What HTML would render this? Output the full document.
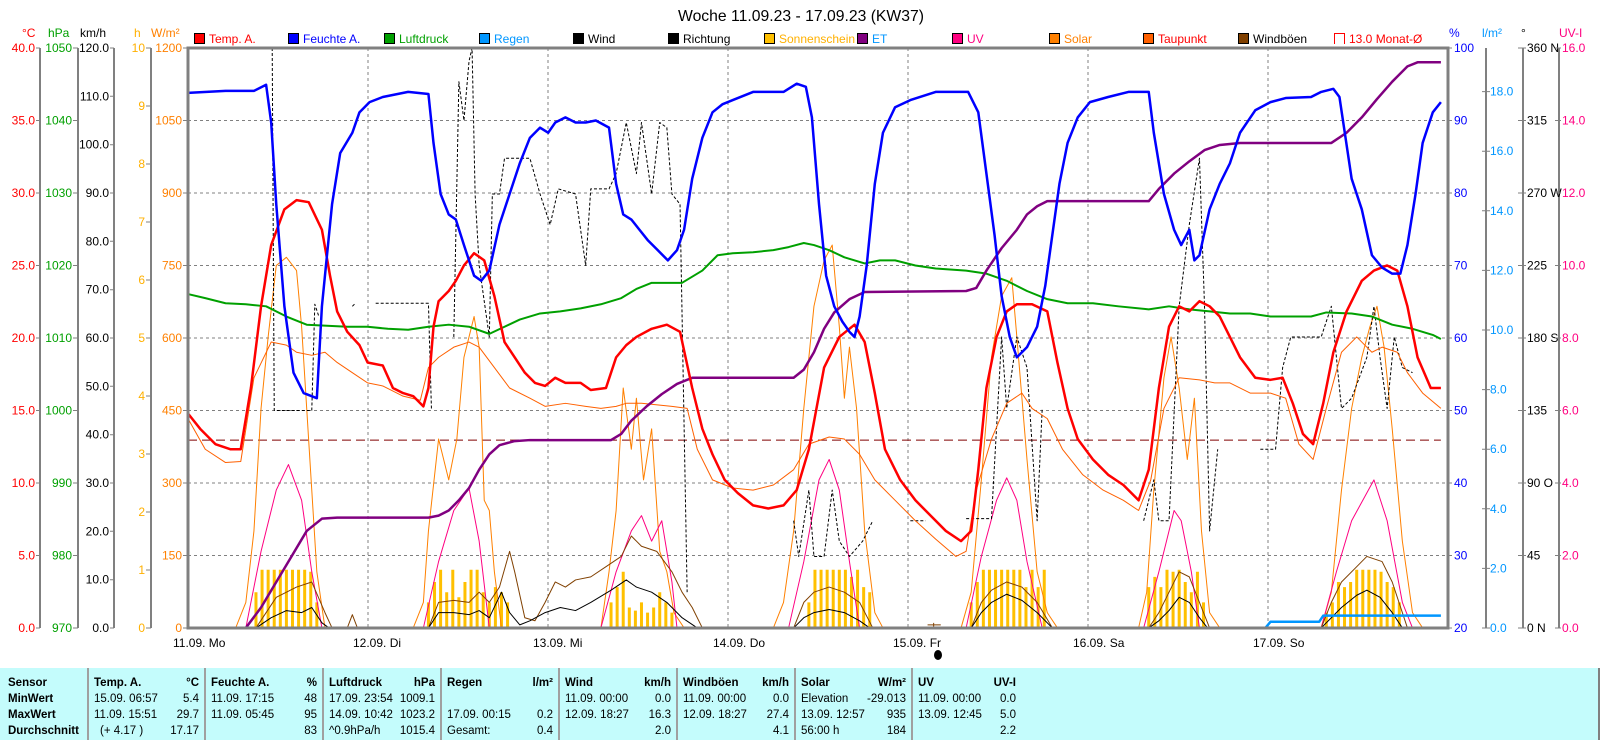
<!DOCTYPE html>
<html><head><meta charset="utf-8"><style>
html,body{margin:0;padding:0;background:#fff;}
svg{display:block;font-family:"Liberation Sans",sans-serif;}
</style></head><body>
<svg width="1600" height="740" viewBox="0 0 1600 740" xmlns="http://www.w3.org/2000/svg">
<rect width="1600" height="740" fill="#fff"/>
<text x="801" y="21" font-size="16" text-anchor="middle" textLength="246" lengthAdjust="spacingAndGlyphs" fill="#000">Woche 11.09.23 - 17.09.23 (KW37)</text>

<!-- unit headers -->
<g font-size="12">
<text x="22" y="37" fill="#f00">°C</text>
<text x="48" y="37" fill="#00a000">hPa</text>
<text x="80" y="37" fill="#000">km/h</text>
<text x="134" y="37" fill="#ffb000">h</text>
<text x="151" y="37" fill="#ff8000">W/m²</text>
<text x="1449" y="37" fill="#0000ff">%</text>
<text x="1482" y="37" fill="#0096ff">l/m²</text>
<text x="1521" y="37" fill="#000">°</text>
<text x="1559" y="37" fill="#ff0080">UV-I</text>
</g>

<!-- legend -->
<g font-size="12">
<rect x="194.5" y="33.5" width="10" height="10" fill="#f00" stroke="#000"/><text x="209" y="43" fill="#f00">Temp. A.</text>
<rect x="288.5" y="33.5" width="10" height="10" fill="#00f" stroke="#000"/><text x="303" y="43" fill="#00f">Feuchte A.</text>
<rect x="384.5" y="33.5" width="10" height="10" fill="#00a000" stroke="#000"/><text x="399" y="43" fill="#00a000">Luftdruck</text>
<rect x="479.5" y="33.5" width="10" height="10" fill="#0096ff" stroke="#000"/><text x="494" y="43" fill="#0096ff">Regen</text>
<rect x="573.5" y="33.5" width="10" height="10" fill="#000" stroke="#000"/><text x="588" y="43" fill="#000">Wind</text>
<rect x="668.5" y="33.5" width="10" height="10" fill="#000" stroke="#000"/><text x="683" y="43" fill="#000">Richtung</text>
<rect x="764.5" y="33.5" width="10" height="10" fill="#ffc000" stroke="#000"/><text x="779" y="43" fill="#ffb000">Sonnenschein</text>
<rect x="857.5" y="33.5" width="10" height="10" fill="#800080" stroke="#000"/><text x="872" y="43" fill="#0096ff">ET</text>
<rect x="952.5" y="33.5" width="10" height="10" fill="#ff0080" stroke="#000"/><text x="967" y="43" fill="#ff0080">UV</text>
<rect x="1049.5" y="33.5" width="10" height="10" fill="#ff8000" stroke="#000"/><text x="1064" y="43" fill="#ff8000">Solar</text>
<rect x="1143.5" y="33.5" width="10" height="10" fill="#ff6000" stroke="#000"/><text x="1158" y="43" fill="#f00">Taupunkt</text>
<rect x="1238.5" y="33.5" width="10" height="10" fill="#804000" stroke="#000"/><text x="1253" y="43" fill="#000">Windböen</text>
<path d="M1334.5 44 V33.5 H1344.5 V44" fill="none" stroke="#f00"/><text x="1349" y="43" fill="#f00">13.0 Monat-Ø</text>
</g>

<!-- left axes lines -->
<g stroke="#808080" stroke-width="2">
<line x1="40" y1="48" x2="40" y2="628"/>
<line x1="78" y1="48" x2="78" y2="628"/>
<line x1="114" y1="48" x2="114" y2="628"/>
<line x1="151" y1="48" x2="151" y2="628"/>
<line x1="1486" y1="48" x2="1486" y2="628"/>
<line x1="1523" y1="48" x2="1523" y2="628"/>
<line x1="1559" y1="48" x2="1559" y2="628"/>
</g>
<g font-size="12" dominant-baseline="central">
<g fill="#f00" text-anchor="end">
<text x="35" y="48">40.0</text><text x="35" y="120.5">35.0</text><text x="35" y="193">30.0</text><text x="35" y="265.5">25.0</text><text x="35" y="338">20.0</text><text x="35" y="410.5">15.0</text><text x="35" y="483">10.0</text><text x="35" y="555.5">5.0</text><text x="35" y="628">0.0</text>
</g>
<g fill="#00a000" text-anchor="end">
<text x="72" y="48">1050</text><text x="72" y="120.5">1040</text><text x="72" y="193">1030</text><text x="72" y="265.5">1020</text><text x="72" y="338">1010</text><text x="72" y="410.5">1000</text><text x="72" y="483">990</text><text x="72" y="555.5">980</text><text x="72" y="628">970</text>
</g>
<g fill="#000" text-anchor="end">
<text x="109" y="48">120.0</text><text x="109" y="96.3">110.0</text><text x="109" y="144.7">100.0</text><text x="109" y="193">90.0</text><text x="109" y="241.3">80.0</text><text x="109" y="289.7">70.0</text><text x="109" y="338">60.0</text><text x="109" y="386.3">50.0</text><text x="109" y="434.7">40.0</text><text x="109" y="483">30.0</text><text x="109" y="531.3">20.0</text><text x="109" y="579.7">10.0</text><text x="109" y="628">0.0</text>
</g>
<g fill="#ffb000" text-anchor="end">
<text x="145" y="48">10</text><text x="145" y="106">9</text><text x="145" y="164">8</text><text x="145" y="222">7</text><text x="145" y="280">6</text><text x="145" y="338">5</text><text x="145" y="396">4</text><text x="145" y="454">3</text><text x="145" y="512">2</text><text x="145" y="570">1</text><text x="145" y="628">0</text>
</g>
<g fill="#ff8000" text-anchor="end">
<text x="182" y="48">1200</text><text x="182" y="120.5">1050</text><text x="182" y="193">900</text><text x="182" y="265.5">750</text><text x="182" y="338">600</text><text x="182" y="410.5">450</text><text x="182" y="483">300</text><text x="182" y="555.5">150</text><text x="182" y="628">0</text>
</g>
<g fill="#0000ff">
<text x="1454" y="48">100</text><text x="1454" y="120.5">90</text><text x="1454" y="193">80</text><text x="1454" y="265.5">70</text><text x="1454" y="338">60</text><text x="1454" y="410.5">50</text><text x="1454" y="483">40</text><text x="1454" y="555.5">30</text><text x="1454" y="628">20</text>
</g>
<g fill="#0096ff">
<text x="1490" y="91.6">18.0</text><text x="1490" y="151.2">16.0</text><text x="1490" y="210.8">14.0</text><text x="1490" y="270.4">12.0</text><text x="1490" y="330">10.0</text><text x="1490" y="389.6">8.0</text><text x="1490" y="449.2">6.0</text><text x="1490" y="508.8">4.0</text><text x="1490" y="568.4">2.0</text><text x="1490" y="628">0.0</text>
</g>
<g fill="#000">
<text x="1527" y="48">360 N</text><text x="1527" y="120.5">315</text><text x="1527" y="193">270 W</text><text x="1527" y="265.5">225</text><text x="1527" y="338">180 S</text><text x="1527" y="410.5">135</text><text x="1527" y="483">90  O</text><text x="1527" y="555.5">45</text><text x="1527" y="628">0  N</text>
</g>
<g fill="#ff0080">
<text x="1562" y="48">16.0</text><text x="1562" y="120.5">14.0</text><text x="1562" y="193">12.0</text><text x="1562" y="265.5">10.0</text><text x="1562" y="338">8.0</text><text x="1562" y="410.5">6.0</text><text x="1562" y="483">4.0</text><text x="1562" y="555.5">2.0</text><text x="1562" y="628">0.0</text>
</g>
</g>
<!-- ticks -->
<g stroke="#808080" stroke-width="1">
<path d="M36 48H40M36 120.5H40M36 193H40M36 265.5H40M36 338H40M36 410.5H40M36 483H40M36 555.5H40M36 628H40"/>
<path d="M73 48H78M73 120.5H78M73 193H78M73 265.5H78M73 338H78M73 410.5H78M73 483H78M73 555.5H78M73 628H78"/>
<path d="M110 48H114M110 96.3H114M110 144.7H114M110 193H114M110 241.3H114M110 289.7H114M110 338H114M110 386.3H114M110 434.7H114M110 483H114M110 531.3H114M110 579.7H114M110 628H114"/>
<path d="M146 48H151M146 106H151M146 164H151M146 222H151M146 280H151M146 338H151M146 396H151M146 454H151M146 512H151M146 570H151M146 628H151"/>
<path d="M183 48H188M183 120.5H188M183 193H188M183 265.5H188M183 338H188M183 410.5H188M183 483H188M183 555.5H188M183 628H188"/>
<path d="M1448 48H1452M1448 120.5H1452M1448 193H1452M1448 265.5H1452M1448 338H1452M1448 410.5H1452M1448 483H1452M1448 555.5H1452M1448 628H1452"/>
<path d="M1482 91.6H1490M1482 151.2H1490M1482 210.8H1490M1482 270.4H1490M1482 330H1490M1482 389.6H1490M1482 449.2H1490M1482 508.8H1490M1482 568.4H1490M1482 628H1490"/>
<path d="M1518 48H1526M1518 120.5H1526M1518 193H1526M1518 265.5H1526M1518 338H1526M1518 410.5H1526M1518 483H1526M1518 555.5H1526M1518 628H1526"/>
<path d="M1555 48H1561M1555 120.5H1561M1555 193H1561M1555 265.5H1561M1555 338H1561M1555 410.5H1561M1555 483H1561M1555 555.5H1561M1555 628H1561"/>
</g>

<!-- grid -->
<g stroke="#808080" stroke-width="1" stroke-dasharray="3,3">
<path d="M188 120.5H1448M188 193H1448M188 265.5H1448M188 338H1448M188 410.5H1448M188 483H1448M188 555.5H1448"/>
<path d="M368 48V628M548 48V628M728 48V628M908 48V628M1088 48V628M1268 48V628"/>
</g>

<!-- data -->
<g transform="translate(188,48) scale(1.0145,1.021) translate(-183,-47)" fill="none" stroke-linejoin="round">
<path vector-effect="non-scaling-stroke" stroke="#ffc000" stroke-width="3" d="M250 615V580M256 615V558M262 615V558M268 615V558M274 615V558M280 615V558M286 615V558M292 615V558M298 615V558M304 615V560M310 615V590
M420 615V590M426 615V570M432 615V558M438 615V580M444 615V558M450 615V585M456 615V570M462 615V558M468 615V558M474 615V580M480 615V590M486 615V575M492 615V580M498 615V590
M600 615V590M606 615V575M612 615V560M618 615V595M624 615V598M630 615V590M636 615V600M642 615V595M648 615V580M654 615V590M660 615V600
M795 615V590M801 615V558M807 615V558M813 615V558M819 615V558M825 615V558M831 615V558M837 615V565M843 615V558M849 615V575M855 615V580
M955 615V590M961 615V570M967 615V558M973 615V558M979 615V558M985 615V558M991 615V558M997 615V558M1003 615V558M1009 615V575M1015 615V558M1021 615V575M1027 615V558
M1130 615V575M1136 615V565M1142 615V575M1148 615V558M1154 615V560M1160 615V558M1166 615V570M1172 615V580M1178 615V560M1184 615V590
M1305 615V600M1311 615V590M1317 615V570M1323 615V575M1329 615V570M1335 615V558M1341 615V558M1347 615V558M1353 615V558M1359 615V560M1365 615V570M1371 615V575M1377 615V590"/>

<path vector-effect="non-scaling-stroke" stroke="#800000" stroke-width="1" stroke-dasharray="9,5" d="M183 431H1418"/>

<path vector-effect="non-scaling-stroke" stroke="#ff8000" stroke-width="1" d="M230 615L240 590L248 520L255 400L262 330L270 260L280 252L290 265L295 320L300 400L310 560L318 615M405 615L415 590L420 520L430 430L440 470L448 430L455 350L465 310L470 340L475 490L480 500L485 560L492 615M590 615L598 560L605 500L612 380L620 440L625 390L632 470L640 420L648 540L655 560L662 600L672 615M760 615L770 590L780 520L790 400L800 300L810 255L818 240L825 320L830 390L835 340L842 400L850 520L860 600L868 615M945 615L955 580L965 470L975 350L985 290L995 272L1000 330L1010 450L1020 560L1030 600L1040 615M1120 615L1128 580L1135 480L1145 370L1152 330L1160 380L1168 450L1175 390L1182 520L1190 600L1200 615M1300 615L1310 580L1320 480L1330 400L1340 350L1348 320L1355 300L1362 340L1370 420L1380 530L1390 600L1400 615"/>

<path vector-effect="non-scaling-stroke" stroke="#ff0080" stroke-width="1" d="M240 615L255 540L270 480L282 455L295 490L305 560L315 615M415 615L430 550L445 500L460 478L470 530L480 615M590 615L605 560L620 520L630 505L640 530L650 510L660 570L665 615M775 615L790 550L805 470L815 450L825 480L835 550L845 615M950 615L965 545L980 490L990 468L1000 490L1010 550L1025 615M1125 615L1140 560L1155 500L1162 510L1172 560L1180 615M1300 615L1315 560L1330 510L1352 470L1365 510L1380 590L1390 615"/>

<path vector-effect="non-scaling-stroke" stroke="#804000" stroke-width="1" d="M250 615L270 585L290 575L305 570L318 600L325 615M340 615L345 602L350 615M420 615L430 590L445 588L460 590L470 580L480 590L490 575L500 540L505 560L515 605L525 608L535 590L545 570L555 575L565 568L580 565L595 555L610 545L620 525L630 535L645 540L660 560L670 580L680 595L690 615M780 615L790 590L800 580L815 575L830 580L845 590L858 615M955 615L965 590L975 578L990 570L1005 575L1020 590L1035 615M1130 615L1140 600L1150 580L1160 560L1170 565L1180 590L1190 615M1300 615L1310 590L1320 570L1335 555L1345 545L1360 550L1370 570L1385 615"/>

<path vector-effect="non-scaling-stroke" stroke="#000" stroke-width="1" d="M250 615L265 605L280 598L295 600L305 595L315 610L322 615M420 615L430 600L445 600L460 602L470 598L480 605L492 580L500 600L510 612L520 608L535 600L550 595L565 598L580 590L600 578L615 568L625 575L640 580L655 590L670 605L685 615M780 615L790 605L800 600L815 597L830 600L845 608L855 615M955 615L965 600L975 590L990 582L1005 588L1020 600L1035 615M1130 615L1140 608L1150 598L1160 585L1170 590L1180 605L1188 615M1300 615L1310 605L1320 595L1335 583L1345 578L1358 585L1370 600L1380 615"/>

<path vector-effect="non-scaling-stroke" stroke="#000" stroke-width="1" stroke-dasharray="3,2" d="M266 47L268 402L305 402L308 298L312 310M345 300L348 297M368 297L420 297L423 402M445 330L450 80L455 118L460 60L463 47L466 190L470 260L480 330L483 190L490 190L495 155L520 155L530 190L540 220L548 185L565 190L575 260L580 185L598 185L605 170L615 120L625 170L630 120L640 190L648 120L655 125L660 190L668 200L675 580M780 510L785 545L795 480L800 545L810 545L818 480L825 530L835 545L848 530L858 510M895 510L910 510M950 508L975 508L985 330L990 400L1000 330L1010 360L1020 510L1025 400M1125 510L1135 470L1140 510L1150 510L1160 300L1170 220L1180 155L1185 300L1190 520L1198 440M1240 440L1255 440L1262 360L1270 330L1300 330L1310 300L1320 400L1330 390L1345 350L1352 300L1358 350L1365 400L1372 330L1380 360L1390 365"/>

<path vector-effect="non-scaling-stroke" stroke="#ff6000" stroke-width="1" d="M183 410L200 440L220 453L235 452L248 370L265 335L280 338L290 345L305 348L318 345L330 355L345 365L360 375L375 378L395 388L412 392L420 360L430 350L445 340L460 335L470 340L485 360L500 380L520 390L535 398L555 395L575 398L590 400L605 398L615 395L630 395L660 398L675 400L685 440L700 470L720 478L740 480L760 475L780 460L795 435L815 428L830 430L845 445L860 470L880 490L900 510L920 528L940 545L950 540L960 480L975 430L990 395L1005 385L1015 400L1030 410L1045 440L1065 465L1085 480L1105 490L1120 500L1132 470L1145 400L1160 370L1180 372L1195 375L1210 375L1230 385L1250 385L1265 390L1278 435L1292 450L1305 400L1320 345L1335 330L1350 345L1360 340L1375 345L1385 365L1400 385L1418 400"/>

<path vector-effect="non-scaling-stroke" stroke="#00a000" stroke-width="2" d="M183 288L200 292L220 297L240 298L260 300L280 310L300 318L320 319L340 320L360 320L380 322L400 323L420 320L440 318L460 320L480 327L495 320L510 313L530 307L550 305L570 302L590 298L610 292L625 283L640 277L670 277L690 265L705 250L720 248L740 247L760 245L775 242L790 238L800 240L815 245L830 252L850 258L865 255L880 255L900 260L920 263L950 265L970 268L990 275L1010 285L1030 293L1050 297L1075 297L1100 300L1130 303L1150 300L1170 303L1190 305L1210 307L1230 307L1250 310L1270 310L1290 310L1305 306L1330 307L1350 310L1370 318L1390 322L1410 328L1418 332"/>

<path vector-effect="non-scaling-stroke" stroke="#800080" stroke-width="2.5" d="M183 615L240 615L255 595L270 570L285 545L300 520L315 508L330 507L420 507L430 505L440 500L450 490L460 478L470 460L480 445L490 436L505 432L520 431L600 431L610 425L620 412L635 398L650 386L665 376L680 370L700 370L780 370L790 362L800 345L810 322L820 306L835 293L850 286L950 285L960 282L970 265L985 243L1000 225L1010 210L1020 202L1030 197L1130 197L1140 185L1155 170L1170 158L1185 147L1200 142L1220 140L1310 140L1325 130L1340 115L1355 97L1370 80L1385 65L1395 61L1418 61"/>

<path vector-effect="non-scaling-stroke" stroke="#f00" stroke-width="2.5" d="M183 405L195 420L210 435L225 440L235 440L245 380L255 300L265 240L278 205L290 196L302 198L315 225L323 270L330 305L340 325L352 338L360 355L375 358L385 380L395 385L405 388L415 398L420 380L425 320L430 295L440 285L447 275L455 260L465 248L475 255L485 290L495 335L505 350L515 365L525 375L535 378L545 370L555 375L570 375L580 382L595 380L605 350L615 338L625 330L640 322L655 318L668 325L680 380L690 420L700 445L712 470L725 483L740 495L755 498L770 495L783 480L795 440L810 360L825 330L840 318L850 335L860 385L870 440L885 470L900 490L915 505L930 520L945 530L955 520L962 460L970 380L980 330L990 305L1000 298L1015 298L1030 305L1040 355L1050 400L1060 430L1075 450L1090 465L1105 475L1120 490L1130 460L1140 380L1150 320L1160 300L1170 305L1180 295L1190 300L1200 310L1210 330L1220 350L1235 370L1250 372L1262 370L1272 395L1282 425L1292 435L1302 395L1312 345L1325 305L1340 275L1352 265L1365 260L1375 265L1385 300L1395 350L1408 380L1418 380"/>

<path vector-effect="non-scaling-stroke" stroke="#0000ff" stroke-width="2.5" d="M183 91L220 89L248 89L260 83L265 120L270 200L278 300L287 365L297 385L310 390L315 300L325 200L333 150L345 130L352 110L362 100L375 95L400 90L420 92L425 140L432 190L440 210L447 215L455 240L465 270L472 275L480 265L490 220L500 190L510 160L520 135L530 125L538 130L545 120L555 115L565 120L575 120L585 118L598 125L605 180L612 210L620 215L628 225L636 235L646 245L656 255L665 245L672 225L680 175L690 135L700 110L710 102L720 98L740 90L770 90L783 82L792 85L798 115L805 200L812 270L820 300L828 315L835 325L840 330L845 310L852 260L860 180L868 130L880 105L895 98L920 90L952 90L962 110L970 170L978 230L985 290L993 330L1000 350L1010 340L1020 320L1028 280L1035 230L1042 180L1050 140L1060 115L1072 100L1090 95L1110 90L1130 90L1135 130L1145 190L1155 225L1162 240L1170 225L1175 255L1180 250L1190 205L1200 180L1210 160L1220 130L1235 108L1250 100L1265 96L1290 95L1300 90L1312 87L1318 95L1330 175L1340 205L1350 250L1360 262L1370 268L1378 268L1385 240L1393 190L1400 140L1410 110L1418 100"/>

<path vector-effect="non-scaling-stroke" stroke="#0096ff" stroke-width="2.5" d="M183 615L1245 615L1250 609L1298 609L1302 603L1418 603"/>
<path vector-effect="non-scaling-stroke" stroke="#804000" stroke-width="1" d="M918 610V615M912 612H925"/>
</g>

<!-- plot border -->
<rect x="188" y="48" width="1260" height="580" fill="none" stroke="#808080" stroke-width="3"/>

<!-- date labels -->
<g font-size="12" fill="#000">
<text x="173" y="647">11.09.  Mo</text>
<text x="353" y="647">12.09.  Di</text>
<text x="533" y="647">13.09.  Mi</text>
<text x="713" y="647">14.09.  Do</text>
<text x="893" y="647">15.09.  Fr</text>
<text x="1073" y="647">16.09.  Sa</text>
<text x="1253" y="647">17.09.  So</text>
</g>
<ellipse cx="938" cy="655" rx="4" ry="5" fill="#000"/>

<!-- table -->
<rect x="0" y="668" width="1598" height="72" fill="#c4fcfc"/>
<line x1="1599" y1="668" x2="1599" y2="740" stroke="#808080" stroke-width="2"/>
<g stroke="#a0a0a0" stroke-width="2">
<line x1="88" y1="668" x2="88" y2="740"/><line x1="205" y1="668" x2="205" y2="740"/><line x1="323" y1="668" x2="323" y2="740"/><line x1="441" y1="668" x2="441" y2="740"/><line x1="559" y1="668" x2="559" y2="740"/><line x1="677" y1="668" x2="677" y2="740"/><line x1="795" y1="668" x2="795" y2="740"/><line x1="912" y1="668" x2="912" y2="740"/>
</g>
<g font-size="11.5" fill="#000">
<g font-weight="bold">
<text x="8" y="686">Sensor</text><text x="8" y="702">MinWert</text><text x="8" y="718">MaxWert</text><text x="8" y="734">Durchschnitt</text>
<text x="94" y="686">Temp. A.</text><text x="199" y="686" text-anchor="end">°C</text>
<text x="211" y="686">Feuchte A.</text><text x="317" y="686" text-anchor="end">%</text>
<text x="329" y="686">Luftdruck</text><text x="435" y="686" text-anchor="end">hPa</text>
<text x="447" y="686">Regen</text><text x="553" y="686" text-anchor="end">l/m²</text>
<text x="565" y="686">Wind</text><text x="671" y="686" text-anchor="end">km/h</text>
<text x="683" y="686">Windböen</text><text x="789" y="686" text-anchor="end">km/h</text>
<text x="801" y="686">Solar</text><text x="906" y="686" text-anchor="end">W/m²</text>
<text x="918" y="686">UV</text><text x="1016" y="686" text-anchor="end">UV-I</text>
</g>
<text x="94" y="702">15.09.  06:57</text><text x="199" y="702" text-anchor="end">5.4</text>
<text x="94" y="718">11.09.  15:51</text><text x="199" y="718" text-anchor="end">29.7</text>
<text x="100" y="734">(+ 4.17 )</text><text x="199" y="734" text-anchor="end">17.17</text>
<text x="211" y="702">11.09.  17:15</text><text x="317" y="702" text-anchor="end">48</text>
<text x="211" y="718">11.09.  05:45</text><text x="317" y="718" text-anchor="end">95</text>
<text x="317" y="734" text-anchor="end">83</text>
<text x="329" y="702">17.09.  23:54</text><text x="435" y="702" text-anchor="end">1009.1</text>
<text x="329" y="718">14.09.  10:42</text><text x="435" y="718" text-anchor="end">1023.2</text>
<text x="329" y="734">^0.9hPa/h</text><text x="435" y="734" text-anchor="end">1015.4</text>
<text x="447" y="718">17.09.  00:15</text><text x="553" y="718" text-anchor="end">0.2</text>
<text x="447" y="734">Gesamt:</text><text x="553" y="734" text-anchor="end">0.4</text>
<text x="565" y="702">11.09.  00:00</text><text x="671" y="702" text-anchor="end">0.0</text>
<text x="565" y="718">12.09.  18:27</text><text x="671" y="718" text-anchor="end">16.3</text>
<text x="671" y="734" text-anchor="end">2.0</text>
<text x="683" y="702">11.09.  00:00</text><text x="789" y="702" text-anchor="end">0.0</text>
<text x="683" y="718">12.09.  18:27</text><text x="789" y="718" text-anchor="end">27.4</text>
<text x="789" y="734" text-anchor="end">4.1</text>
<text x="801" y="702">Elevation</text><text x="906" y="702" text-anchor="end">-29.013</text>
<text x="801" y="718">13.09.  12:57</text><text x="906" y="718" text-anchor="end">935</text>
<text x="801" y="734">56:00 h</text><text x="906" y="734" text-anchor="end">184</text>
<text x="918" y="702">11.09.  00:00</text><text x="1016" y="702" text-anchor="end">0.0</text>
<text x="918" y="718">13.09.  12:45</text><text x="1016" y="718" text-anchor="end">5.0</text>
<text x="1016" y="734" text-anchor="end">2.2</text>
</g>
</svg>
</body></html>
